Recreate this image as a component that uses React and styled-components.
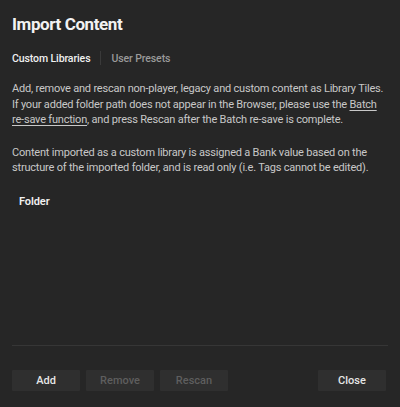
import React from "react";
import styled, { createGlobalStyle } from "styled-components";

const Global = createGlobalStyle`
  html, body { margin: 0; padding: 0; background: #262626; }
  body { font-family: Roboto, "Noto Sans", sans-serif; -webkit-font-smoothing: antialiased; }
`;

const Dialog = styled.div`
  width: 400px;
  height: 407px;
  box-sizing: border-box;
  background: #262626;
  padding: 12px 12px 16px 12px;
  display: flex;
  flex-direction: column;
  color: #cfcfcf;
`;

const Title = styled.h1`
  margin: 0;
  font-size: 17px;
  font-weight: 700;
  letter-spacing: -0.4px;
  color: #f2f2f2;
  line-height: 24px;
`;

const Tabs = styled.div`
  display: flex;
  align-items: center;
  margin-top: 15px;
  height: 14px;
`;

const Tab = styled.div`
  font-size: 10.5px;
  font-weight: 500;
  letter-spacing: -0.1px;
  color: ${(p) => (p.$active ? "#f0f0f0" : "#9a9a9a")};
`;

const TabSep = styled.div`
  width: 1px;
  height: 14px;
  background: #3a3a3a;
  margin: 0 10px;
`;

const Para = styled.p`
  margin: 16px 0 0 0;
  font-size: 11px;
  line-height: 15.5px;
  letter-spacing: -0.2px;
  color: #c8c8c8;
  & + & { margin-top: 17px; }
`;

const Link = styled.span`
  text-decoration: underline;
  text-underline-offset: 2px;
`;

const FolderLabel = styled.div`
  margin: 19px 0 0 7px;
  font-size: 11px;
  font-weight: 600;
  letter-spacing: -0.1px;
  color: #f0f0f0;
`;

const Spacer = styled.div`
  flex: 1;
`;

const Divider = styled.div`
  height: 1px;
  background: #363636;
`;

const Footer = styled.div`
  display: flex;
  gap: 6px;
  margin-top: 24px;
`;

const Button = styled.button`
  width: 68px;
  height: 21px;
  border: none;
  border-radius: 1px;
  background: #2f2f2f;
  font-family: Roboto, "Noto Sans", sans-serif;
  font-size: 11px;
  font-weight: 500;
  color: ${(p) => (p.disabled ? "#5e5e5e" : "#e6e6e6")};
  padding: 0;
  margin-left: ${(p) => (p.$right ? "auto" : "0")};
  margin-right: ${(p) => (p.$right ? "2px" : "0")};
`;

export default function App() {
  return (
    <>
      <Global />
      <Dialog>
        <Title>Import Content</Title>
        <Tabs>
          <Tab $active>Custom Libraries</Tab>
          <TabSep />
          <Tab>User Presets</Tab>
        </Tabs>
        <Para>
          Add, remove and rescan non-player, legacy and custom content as Library Tiles.
          If your added folder path does not appear in the Browser, please use the{" "}
          <Link>Batch re-save function</Link>, and press Rescan after the Batch re-save is complete.
        </Para>
        <Para>
          Content imported as a custom library is assigned a Bank value based on the
          structure of the imported folder, and is read only (i.e. Tags cannot be edited).
        </Para>
        <FolderLabel>Folder</FolderLabel>
        <Spacer />
        <Divider />
        <Footer>
          <Button>Add</Button>
          <Button disabled>Remove</Button>
          <Button disabled>Rescan</Button>
          <Button $right>Close</Button>
        </Footer>
      </Dialog>
    </>
  );
}
